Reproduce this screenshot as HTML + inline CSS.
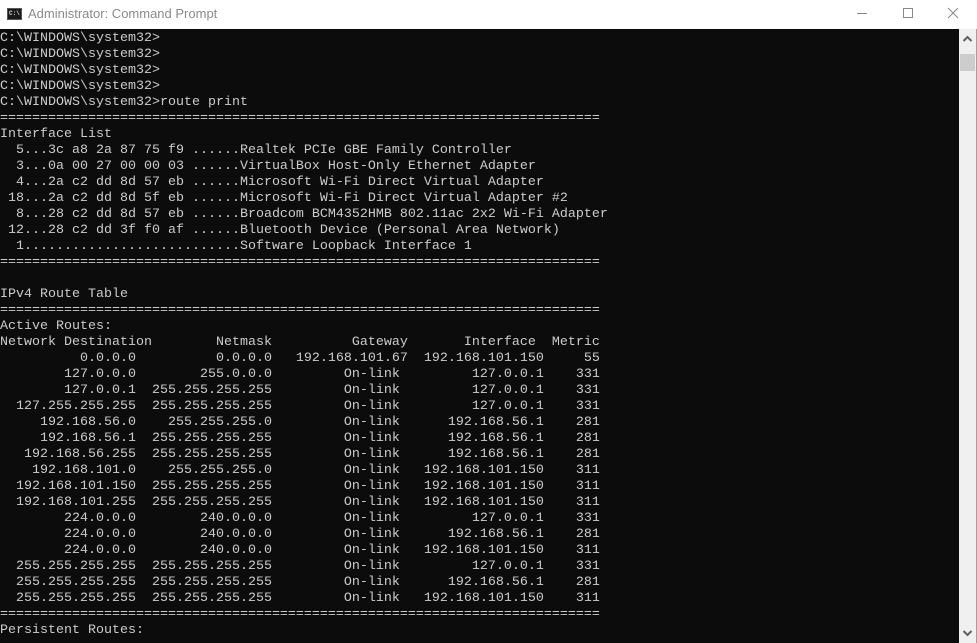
<!DOCTYPE html>
<html><head><meta charset="utf-8"><style>
html,body{margin:0;padding:0;width:977px;height:643px;overflow:hidden;background:#0c0c0c}
#title{position:absolute;left:0;top:0;width:977px;height:29px;background:#fff}
#title .t{position:absolute;left:28px;top:6px;font:13px "Liberation Sans",sans-serif;color:#8a8a8a}
#icon{position:absolute;left:7px;top:8px;width:15px;height:12px;background:#1a1a1a;border:1px solid #555;box-sizing:border-box}
#icon span{position:absolute;left:1px;top:1px;font:bold 6px "Liberation Mono",monospace;color:#ddd;line-height:7px}
pre{position:absolute;left:0;top:31px;margin:0;font:13.33px/16px "Liberation Mono",monospace;color:#cccccc}
#sb{position:absolute;left:959px;top:29px;width:17px;height:614px;background:#f0f0f0}
#thumb{position:absolute;left:960px;top:54px;width:15px;height:17px;background:#cdcdcd}
#edge{position:absolute;left:976px;top:29px;width:1px;height:614px;background:#a0a0a0}
</style></head><body>
<div id="title"><div id="icon"><span>C:\</span></div><div class="t">Administrator: Command Prompt</div>
<svg style="position:absolute;left:850px;top:6px" width="120" height="16">
<line x1="7" y1="7.5" x2="17" y2="7.5" stroke="#888" stroke-width="1"/>
<rect x="53.5" y="2.5" width="9" height="9" fill="none" stroke="#888"/>
<line x1="98" y1="2" x2="108" y2="12" stroke="#888"/><line x1="108" y1="2" x2="98" y2="12" stroke="#888"/>
</svg></div>
<pre>C:\WINDOWS\system32>
C:\WINDOWS\system32>
C:\WINDOWS\system32>
C:\WINDOWS\system32>
C:\WINDOWS\system32>route print
===========================================================================
Interface List
  5...3c a8 2a 87 75 f9 ......Realtek PCIe GBE Family Controller
  3...0a 00 27 00 00 03 ......VirtualBox Host-Only Ethernet Adapter
  4...2a c2 dd 8d 57 eb ......Microsoft Wi-Fi Direct Virtual Adapter
 18...2a c2 dd 8d 5f eb ......Microsoft Wi-Fi Direct Virtual Adapter #2
  8...28 c2 dd 8d 57 eb ......Broadcom BCM4352HMB 802.11ac 2x2 Wi-Fi Adapter
 12...28 c2 dd 3f f0 af ......Bluetooth Device (Personal Area Network)
  1...........................Software Loopback Interface 1
===========================================================================

IPv4 Route Table
===========================================================================
Active Routes:
Network Destination        Netmask          Gateway       Interface  Metric
          0.0.0.0          0.0.0.0   192.168.101.67  192.168.101.150     55
        127.0.0.0        255.0.0.0         On-link         127.0.0.1    331
        127.0.0.1  255.255.255.255         On-link         127.0.0.1    331
  127.255.255.255  255.255.255.255         On-link         127.0.0.1    331
     192.168.56.0    255.255.255.0         On-link      192.168.56.1    281
     192.168.56.1  255.255.255.255         On-link      192.168.56.1    281
   192.168.56.255  255.255.255.255         On-link      192.168.56.1    281
    192.168.101.0    255.255.255.0         On-link   192.168.101.150    311
  192.168.101.150  255.255.255.255         On-link   192.168.101.150    311
  192.168.101.255  255.255.255.255         On-link   192.168.101.150    311
        224.0.0.0        240.0.0.0         On-link         127.0.0.1    331
        224.0.0.0        240.0.0.0         On-link      192.168.56.1    281
        224.0.0.0        240.0.0.0         On-link   192.168.101.150    311
  255.255.255.255  255.255.255.255         On-link         127.0.0.1    331
  255.255.255.255  255.255.255.255         On-link      192.168.56.1    281
  255.255.255.255  255.255.255.255         On-link   192.168.101.150    311
===========================================================================
Persistent Routes:</pre>
<div id="sb"></div><div id="thumb"></div><div id="edge"></div>
<svg style="position:absolute;left:960px;top:33px" width="15" height="12"><polyline points="3.5,8 7.5,4 11.5,8" fill="none" stroke="#606060" stroke-width="2"/></svg>
<svg style="position:absolute;left:960px;top:628px" width="15" height="12"><polyline points="3.5,3 7.5,7 11.5,3" fill="none" stroke="#606060" stroke-width="2"/></svg>
</body></html>
